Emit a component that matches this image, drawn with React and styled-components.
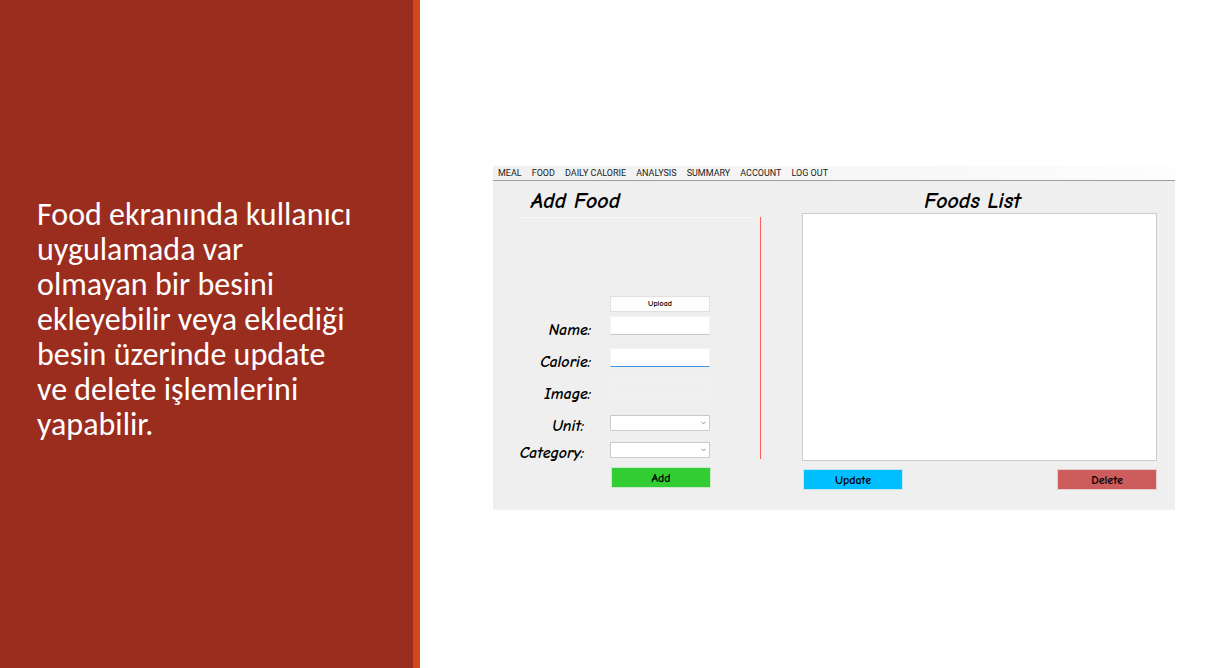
import React from "react";
import styled, { createGlobalStyle } from "styled-components";

const comic = `"Comic Sans MS", "Comic Neue", Lato, sans-serif`;

const GlobalStyle = createGlobalStyle`
  *, *::before, *::after { box-sizing: border-box; }
  body { margin: 0; background: #fff; }
  button, input, select { margin: 0; font: inherit; border-radius: 0; }
  h2, p { margin: 0; }
`;

const Slide = styled.main`
  display: grid;
  grid-template-columns: 14fr 27fr;
  min-height: 100vh;
`;

const Caption = styled.section`
  display: flex;
  align-items: center;
  padding: 0 56px 30px 37px;
  background: #9b2d1f;
  border-right: 7px solid #d34817;
`;

const CaptionText = styled.p`
  color: #fff;
  font-family: Calibri, Carlito, "Open Sans", sans-serif;
  font-size: 32px;
  line-height: 35px;
`;

const Stage = styled.section`
  display: flex;
  align-items: center;
  padding: 8px 55px 0 73px;
`;

const AppWindow = styled.div`
  flex: 1;
  background: #efefef;
`;

const MenuBar = styled.nav`
  display: flex;
  gap: 10px;
  padding: 0 5px;
  background: linear-gradient(90deg, #f0f0f0, #fdfdfd);
  border-bottom: 1px solid #a0a0a0;
`;

const MenuLink = styled.a`
  color: #222;
  font: 9px/14px Roboto, "Open Sans", sans-serif;
  text-decoration: none;
  white-space: nowrap;
`;

const Body = styled.div`
  display: grid;
  grid-template-columns: 268px 1fr;
  gap: 41px;
  padding: 8px 18px 20px 0;
`;

const Title = styled.h2`
  color: #000;
  font: italic bold 22px/24px ${comic};
  text-align: ${(p) => p.$align || "left"};
`;

const AddPane = styled.form`
  padding-left: 26px;

  ${Title} {
    padding-left: 12px;
  }
`;

const FormArea = styled.div`
  display: flex;
  flex-direction: column;
  margin-top: 4px;
  height: 242px;
  border-right: 1px solid #ff5a5a;
`;

const Rule = styled.hr`
  width: 236px;
  margin: 0 0 78px;
  border: 0;
  border-top: 1px solid #f8f8f8;
`;

const Rows = styled.div`
  display: grid;
  gap: ${(p) => p.$gap}px;
  margin-top: ${(p) => p.$top}px;
`;

const Row = styled.div`
  display: flex;
  align-items: flex-end;
  justify-content: flex-end;
  gap: ${(p) => p.$gap || 19}px;
  padding-right: 50px;
`;

const Label = styled.label`
  color: #000;
  font: italic bold 16px/10px ${comic};
`;

const TextBox = styled.input`
  width: 100px;
  height: 19px;
  padding: 0 4px;
  font: 10px "Open Sans", sans-serif;
  background: #fff;
  border: 1px solid #f4f4f4;
  border-bottom: 1px solid ${(p) => (p.$active ? "#3c96e4" : "#c8c8c8")};
  outline: none;

  &:disabled {
    background: transparent;
    border-color: #f3f3f3;
  }
`;

const SelectWrap = styled.span`
  position: relative;
  display: flex;

  svg {
    position: absolute;
    right: 4px;
    top: 6px;
    pointer-events: none;
  }
`;

const Select = styled.select`
  width: 100px;
  height: 16px;
  appearance: none;
  padding: 0 12px 0 4px;
  font: 10px "Open Sans", sans-serif;
  background: #fff;
  border: 1px solid #cacaca;
  border-radius: 1px;
`;

const Button = styled.button`
  width: 100px;
  height: ${(p) => (p.$small ? 16 : 21)}px;
  padding: 0;
  color: #000;
  background: ${(p) => p.$color};
  border: 1px solid ${(p) => p.$edge};
  font: bold ${(p) => (p.$small ? 8 : 12)}px/14px ${comic};
`;

const ListPane = styled.section`
  min-width: 0;

  ${Title} {
    padding-right: 14px;
  }
`;

const FoodsBox = styled.div`
  height: 248px;
  background: #fff;
  border: 1px solid #cccdd0;
`;

const Actions = styled.div`
  display: flex;
  justify-content: space-between;
  margin-top: 8px;
  padding-left: 1px;
`;

const menu = ["MEAL", "FOOD", "DAILY CALORIE", "ANALYSIS", "SUMMARY", "ACCOUNT", "LOG OUT"];

function Combo({ id }) {
  return (
    <SelectWrap>
      <Select id={id} defaultValue="">
        <option value="" />
      </Select>
      <svg width="5" height="4" viewBox="0 0 5 4" fill="none" stroke="#888">
        <path d="M.5 .8 2.5 2.8 4.5 .8" />
      </svg>
    </SelectWrap>
  );
}

export default function App() {
  return (
    <>
      <GlobalStyle />
      <Slide>
        <Caption>
          <CaptionText>
            Food ekranında kullanıcı uygulamada var olmayan bir besini ekleyebilir veya eklediği
            besin üzerinde update ve delete işlemlerini yapabilir.
          </CaptionText>
        </Caption>
        <Stage>
          <AppWindow>
            <MenuBar>
              {menu.map((item) => (
                <MenuLink key={item} href="#">
                  {item}
                </MenuLink>
              ))}
            </MenuBar>
            <Body>
              <AddPane onSubmit={(e) => e.preventDefault()}>
                <Title>Add Food</Title>
                <FormArea>
                  <Rule />
                  <Row>
                    <Button type="button" $small $color="#fdfdfd" $edge="#e0e0e0">
                      Upload
                    </Button>
                  </Row>
                  <Rows $gap={13} $top={4}>
                    <Row>
                      <Label htmlFor="name">Name:</Label>
                      <TextBox id="name" />
                    </Row>
                    <Row>
                      <Label htmlFor="calorie">Calorie:</Label>
                      <TextBox id="calorie" $active />
                    </Row>
                    <Row>
                      <Label htmlFor="image">Image:</Label>
                      <TextBox id="image" disabled />
                    </Row>
                  </Rows>
                  <Rows $gap={11} $top={16}>
                    <Row $gap={26}>
                      <Label htmlFor="unit">Unit:</Label>
                      <Combo id="unit" />
                    </Row>
                    <Row $gap={26}>
                      <Label htmlFor="category">Category:</Label>
                      <Combo id="category" />
                    </Row>
                  </Rows>
                </FormArea>
                <Rows $top={8}>
                  <Row>
                    <Button type="submit" $color="#32cd32" $edge="#c9e8c9">
                      Add
                    </Button>
                  </Row>
                </Rows>
              </AddPane>
              <ListPane>
                <Title $align="center">Foods List</Title>
                <FoodsBox />
                <Actions>
                  <Button type="button" $color="#00bfff" $edge="#c4e6f2">
                    Update
                  </Button>
                  <Button type="button" $color="#cd5c5c" $edge="#e6cccc">
                    Delete
                  </Button>
                </Actions>
              </ListPane>
            </Body>
          </AppWindow>
        </Stage>
      </Slide>
    </>
  );
}
